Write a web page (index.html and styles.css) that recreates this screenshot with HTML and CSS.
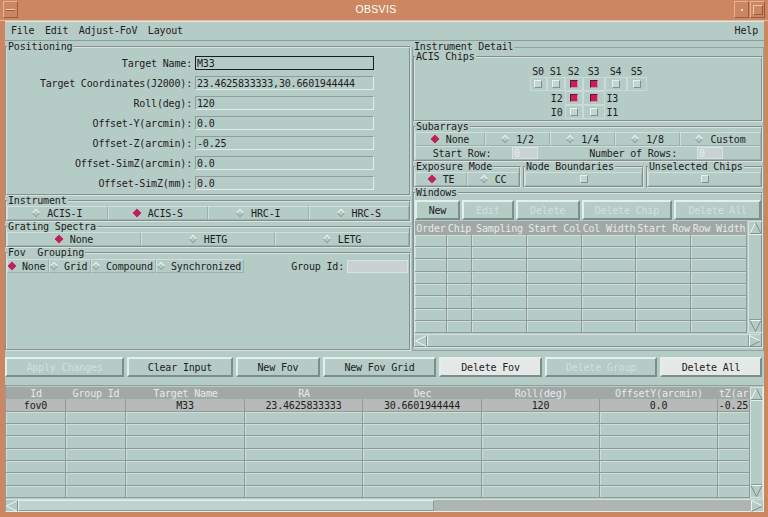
FILE: index.html
```html
<!DOCTYPE html>
<html lang="en">
<head>
<meta charset="UTF-8">
<title>OBSVIS</title>
<link rel="stylesheet" href="styles.css">
</head>
<body>
<div class="window">
  <div class="titlebar">
    <div class="wm-btn wm-menu"><span class="wm-dash"></span></div>
    <div class="wm-title">OBSVIS</div>
    <div class="wm-btn wm-min"><span class="wm-dot"></span></div>
    <div class="wm-btn wm-max"><span class="wm-square"></span></div>
  </div>

  <div class="client">
    <div class="menubar">
      <span>File</span><span>Edit</span><span>Adjust-FoV</span><span>Layout</span>
      <span class="help">Help</span>
    </div>

    <div class="upper">
      <!-- left column -->
      <div class="left">
        <fieldset class="group positioning">
          <legend>Positioning</legend>
          <div class="pos-row"><label>Target Name:</label><input class="field focus" value="M33"></div>
          <div class="pos-row"><label>Target Coordinates(J2000):</label><input class="field" value="23.4625833333,30.6601944444"></div>
          <div class="pos-row"><label>Roll(deg):</label><input class="field" value="120"></div>
          <div class="pos-row"><label>Offset-Y(arcmin):</label><input class="field" value="0.0"></div>
          <div class="pos-row"><label>Offset-Z(arcmin):</label><input class="field" value="-0.25"></div>
          <div class="pos-row"><label>Offset-SimZ(arcmin):</label><input class="field" value="0.0"></div>
          <div class="pos-row"><label>Offset-SimZ(mm):</label><input class="field" value="0.0"></div>
        </fieldset>

        <fieldset class="group">
          <legend>Instrument</legend>
          <div class="radio-row cols-4">
            <div class="cell"><span class="dia"></span>ACIS-I</div>
            <div class="cell"><span class="dia on"></span>ACIS-S</div>
            <div class="cell"><span class="dia"></span>HRC-I</div>
            <div class="cell"><span class="dia"></span>HRC-S</div>
          </div>
        </fieldset>

        <fieldset class="group">
          <legend>Grating Spectra</legend>
          <div class="radio-row cols-3">
            <div class="cell"><span class="dia on"></span>None</div>
            <div class="cell"><span class="dia"></span>HETG</div>
            <div class="cell"><span class="dia"></span>LETG</div>
          </div>
        </fieldset>

        <fieldset class="group grouping">
          <legend>Fov&nbsp;&nbsp;Grouping</legend>
          <div class="group-row">
            <div class="cell left-cell w42"><span class="dia on"></span>None</div>
            <div class="cell left-cell w42"><span class="dia"></span>Grid</div>
            <div class="cell left-cell w65"><span class="dia"></span>Compound</div>
            <div class="cell left-cell w88"><span class="dia"></span>Synchronized</div>
            <span class="group-id">Group Id:</span>
            <input class="field off group-input" value="" disabled>
          </div>
        </fieldset>
      </div>

      <!-- right column -->
      <fieldset class="group right">
        <legend>Instrument Detail</legend>

        <fieldset class="group chips-group">
          <legend>ACIS Chips</legend>
          <div class="chips">
            <span class="chip-label">S0</span><span class="chip-label">S1</span><span class="chip-label">S2</span>
            <span class="chip-label">S3</span><span class="chip-label">S4</span><span class="chip-label">S5</span>

            <span class="chip"><span class="box"></span></span>
            <span class="chip"><span class="box"></span></span>
            <span class="chip"><span class="box on"></span></span>
            <span class="chip"><span class="box on"></span></span>
            <span class="chip"><span class="box"></span></span>
            <span class="chip"><span class="box"></span></span>

            <span></span>
            <span class="chip-label to-right">I2</span>
            <span class="chip"><span class="box on"></span></span>
            <span class="chip"><span class="box on"></span></span>
            <span class="chip-label to-left">I3</span>
            <span></span>

            <span></span>
            <span class="chip-label to-right">I0</span>
            <span class="chip"><span class="box"></span></span>
            <span class="chip"><span class="box"></span></span>
            <span class="chip-label to-left">I1</span>
            <span></span>
          </div>
        </fieldset>

        <fieldset class="group">
          <legend>Subarrays</legend>
          <div class="radio-row sub-modes">
            <div class="cell"><span class="dia on"></span>None</div>
            <div class="cell"><span class="dia"></span>1/2</div>
            <div class="cell"><span class="dia"></span>1/4</div>
            <div class="cell"><span class="dia"></span>1/8</div>
            <div class="cell"><span class="dia"></span>Custom</div>
          </div>
          <div class="sub-rows">
            <span class="sub-label">Start Row:</span>
            <span><input class="field off tiny" value="0" disabled></span>
            <span class="sub-label to-right">Number of Rows:</span>
            <span><input class="field off tiny" value="0" disabled></span>
            <span></span>
          </div>
        </fieldset>

        <div class="exp-row">
          <fieldset class="group exp">
            <legend>Exposure Mode</legend>
            <div class="radio-row cols-2">
              <div class="cell"><span class="dia on"></span>TE</div>
              <div class="cell"><span class="dia"></span>CC</div>
            </div>
          </fieldset>
          <fieldset class="group node">
            <legend>Node Boundaries</legend>
            <div class="radio-row"><div class="cell"><span class="box"></span></div></div>
          </fieldset>
          <fieldset class="group unsel">
            <legend>Unselected Chips</legend>
            <div class="radio-row"><div class="cell"><span class="box"></span></div></div>
          </fieldset>
        </div>

        <fieldset class="group windows">
          <legend>Windows</legend>
          <div class="win-buttons">
            <button class="btn w45">New</button>
            <button class="btn w52 off">Edit</button>
            <button class="btn w64 off">Delete</button>
            <button class="btn w91 off">Delete Chip</button>
            <button class="btn w87 off">Delete All</button>
          </div>
          <div class="win-body">
            <div class="grid win-grid">
              <span class="th">Order</span><span class="th">Chip</span><span class="th">Sampling</span><span class="th">Start Col</span>
              <span class="th">Col Width</span><span class="th">Start Row</span><span class="th">Row Width</span>
            </div>
            <div class="vscroll">
              <svg class="arr" width="13" height="12" viewBox="0 0 13 12"><path d="M1 11.5L6.5 0.5" stroke="#eef4f2" fill="none"/><path d="M6.5 0.5L12 11.5H1" stroke="#7f928e" fill="none"/></svg>
              <span class="track"></span>
              <svg class="arr" width="13" height="12" viewBox="0 0 13 12"><path d="M1 0.5H12" stroke="#eef4f2" fill="none"/><path d="M1 0.5L6.5 11.5L12 0.5" stroke="#7f928e" fill="none"/></svg>
            </div>
          </div>
          <div class="hscroll">
            <svg class="arr" width="12" height="12" viewBox="0 0 12 12"><path d="M11.5 0.5L0.5 6L11.5 11.5" stroke="#eef4f2" fill="none"/><path d="M11.5 0.5V11.5" stroke="#7f928e" fill="none"/></svg>
            <span class="track"></span>
            <svg class="arr" width="12" height="12" viewBox="0 0 12 12"><path d="M0.5 11.5V0.5L11.5 6" stroke="#eef4f2" fill="none"/><path d="M11.5 6L0.5 11.5" stroke="#7f928e" fill="none"/></svg>
          </div>
        </fieldset>
      </fieldset>
    </div>

    <div class="actions">
      <button class="btn w119 off">Apply Changes</button>
      <button class="btn w106">Clear Input</button>
      <button class="btn w84">New Fov</button>
      <button class="btn w113">New Fov Grid</button>
      <button class="btn w103 light">Delete Fov</button>
      <button class="btn w112 off">Delete Group</button>
      <button class="btn w102 light">Delete All</button>
    </div>

    <div class="fov-frame">
      <div class="fov-body">
        <div class="grid fov-grid">
          <span class="th">Id</span><span class="th">Group Id</span><span class="th">Target Name</span><span class="th">RA</span>
          <span class="th">Dec</span><span class="th">Roll(deg)</span><span class="th">OffsetY(arcmin)</span><span class="th cut">tZ(ar</span>

          <span class="td sel">fov0</span><span class="td sel"></span><span class="td sel">M33</span><span class="td sel">23.4625833333</span>
          <span class="td sel">30.6601944444</span><span class="td sel">120</span><span class="td sel">0.0</span><span class="td sel">-0.25</span>
        </div>
        <div class="vscroll">
          <svg class="arr" width="13" height="12" viewBox="0 0 13 12"><path d="M1 11.5L6.5 0.5" stroke="#eef4f2" fill="none"/><path d="M6.5 0.5L12 11.5H1" stroke="#7f928e" fill="none"/></svg>
          <span class="track"></span>
          <svg class="arr" width="13" height="12" viewBox="0 0 13 12"><path d="M1 0.5H12" stroke="#eef4f2" fill="none"/><path d="M1 0.5L6.5 11.5L12 0.5" stroke="#7f928e" fill="none"/></svg>
        </div>
      </div>
      <div class="hscroll fov-hscroll">
        <svg class="arr" width="12" height="12" viewBox="0 0 12 12"><path d="M11.5 0.5L0.5 6L11.5 11.5" stroke="#eef4f2" fill="none"/><path d="M11.5 0.5V11.5" stroke="#7f928e" fill="none"/></svg>
        <span class="thumb"></span>
        <span class="trough"></span>
        <svg class="arr" width="12" height="12" viewBox="0 0 12 12"><path d="M0.5 11.5V0.5L11.5 6" stroke="#eef4f2" fill="none"/><path d="M11.5 6L0.5 11.5" stroke="#7f928e" fill="none"/></svg>
      </div>
    </div>
  </div>
</div>

<script>
    // empty rows of both tables
    function fillRows(grid, cols, count) {
        for (let r = 0; r < count; r++) {
            for (let c = 0; c < cols; c++) {
                const cell = document.createElement('span');
                cell.className = 'td';
                grid.appendChild(cell);
            }
        }
    }
    fillRows(document.querySelector('.win-grid'), 7, 8);
    fillRows(document.querySelector('.fov-grid'), 8, 7);
</script>
</body>
</html>
```

FILE: styles.css
```css
body {
    margin: 0;
    background: #cc8762;
    font-family: "DejaVu Sans Mono", monospace;
    font-size: 10px;
    letter-spacing: -0.17px;
    color: #1d2120;
    overflow: hidden;
}
.window {
    width: 768px;
    height: 517px;
    display: flex;
    flex-direction: column;
    background: #cc8762;
}

/* window manager frame */
.titlebar {
    height: 21px;
    display: flex;
    box-sizing: border-box;
    padding: 1px 3px 2px;
    border-bottom: 1px solid #eab89c;
}
.wm-btn {
    width: 15px;
    box-sizing: border-box;
    border: 1px solid;
    border-color: #e8b395 #9a5c3e #9a5c3e #e8b395;
    display: flex;
    align-items: center;
    justify-content: center;
}
.wm-dash {
    width: 9px;
    height: 1px;
    background: #f3d2c0;
    border-bottom: 1px solid #955a3b;
}
.wm-title {
    flex: 1;
    text-align: center;
    color: #ffffff;
    font-family: "Liberation Sans", Arial, sans-serif;
    font-size: 10.5px;
    letter-spacing: 0.3px;
    line-height: 17px;
}
.wm-min {
    margin-right: 1px;
}
.wm-dot {
    width: 2px;
    height: 2px;
    background: #f5d8c8;
}
.wm-square {
    width: 10px;
    height: 10px;
    box-sizing: border-box;
    border: 1px solid;
    border-color: #f0c6ae #965a3c #965a3c #f0c6ae;
}

.client {
    margin: 0 4px 5px 5px;
    height: 491px;
    background: #b4cbc6;
    display: flex;
    flex-direction: column;
}

.menubar {
    height: 20px;
    box-sizing: border-box;
    display: flex;
    align-items: center;
    padding: 0 6px;
    border-bottom: 1px solid #8a9d99;
    box-shadow: inset 0 1px 0 #dbe8e5;
}
.menubar span {
    margin-right: 10.5px;
}
.menubar .help {
    margin-left: auto;
    margin-right: 0;
}

.upper {
    display: flex;
    height: 309px;
    margin-top: 1px;
}
.left {
    width: 406px;
    margin-right: 1px;
    display: flex;
    flex-direction: column;
}

/* etched frames */
.group {
    margin: 0;
    padding: 0;
    min-width: 0;
    border: 2px groove #d6e4e1;
}
.group legend {
    padding: 0 1px;
    margin-left: 0;
    line-height: 10px;
    height: 10px;
}
.positioning {
    padding: 1px 0;
}
.grouping {
    flex: 1;
}
.right {
    flex: 1;
    border-width: 1px;
    border-style: solid;
    border-color: #8fa39f;
    padding-bottom: 1px;
}
.right .group {
    margin-top: 0;
}

.pos-row {
    display: flex;
    align-items: center;
    height: 20px;
}
.pos-row label {
    width: 185px;
    margin-right: 3px;
    text-align: right;
    white-space: nowrap;
}
.field {
    width: 179px;
    height: 14px;
    box-sizing: border-box;
    margin: 0;
    padding: 0 1px;
    border: 1px solid;
    border-color: #8c9f9b #e2ece9 #e2ece9 #8c9f9b;
    background: #b4cbc6;
    font: inherit;
    letter-spacing: inherit;
    color: inherit;
    outline: none;
}
.field.focus {
    border-color: #1a1e1d;
}
.field.off {
    background: #c9d2d0;
    color: #e9eeed;
    border-color: #d8e2e0;
}

/* radio rows */
.radio-row {
    display: grid;
    height: 14px;
}
.cols-4 {
    grid-template-columns: repeat(4, 1fr);
}
.cols-3 {
    grid-template-columns: repeat(3, 1fr);
}
.cols-2 {
    grid-template-columns: repeat(2, 1fr);
}
.cell {
    display: flex;
    align-items: center;
    justify-content: center;
    gap: 7px;
    box-sizing: border-box;
    border: 1px solid;
    border-color: #d0dfdc #9db1ad #9db1ad #d0dfdc;
    white-space: nowrap;
}
.dia {
    width: 6px;
    height: 6px;
    box-sizing: border-box;
    margin: 0 1px;
    transform: rotate(45deg);
    border: 1px solid;
    border-color: #eef4f2 #8fa39f #8fa39f #eef4f2;
}
.dia.on {
    background: #c0225a;
    border-color: #c0225a;
}

.group-row {
    display: flex;
    height: 14px;
    align-items: center;
    margin-top: 1px;
}
.left-cell {
    justify-content: flex-start;
    height: 14px;
    padding-left: 0;
    gap: 6px;
}
.w42 { width: 42px; }
.w65 { width: 65px; }
.w88 { width: 88px; }
.group-id {
    margin-left: auto;
    margin-right: 3px;
}
.group-input {
    width: 61px;
    height: 13px;
    margin-right: 1px;
}

/* ACIS chips */
.chips-group {
    padding-bottom: 1px;
}
.chips {
    display: grid;
    grid-template-columns: 17px 18px 18px 22px 22px 20px;
    grid-template-rows: 12px 14px 14px 14px;
    width: fit-content;
    margin: 3px auto 0;
}
.chip-label {
    display: flex;
    align-items: center;
    justify-content: center;
}
.chip-label.to-right {
    justify-content: flex-end;
    padding-right: 2px;
}
.chip-label.to-left {
    justify-content: flex-start;
    padding-left: 2px;
}
.chip {
    display: flex;
    align-items: center;
    justify-content: center;
    border: 1px solid #cadad6;
}
.box {
    width: 8px;
    height: 8px;
    box-sizing: border-box;
    border: 1px solid;
    border-color: #e9f1ef #7f928e #7f928e #e9f1ef;
    background: #c3d5d1;
}
.box.on {
    background: #c0225a;
    border-color: #5e1730 #e08aa8 #e08aa8 #5e1730;
}

/* subarrays */
.sub-modes {
    grid-template-columns: 70px 65px 65px 65px 1fr;
}
.sub-rows {
    display: grid;
    grid-template-columns: 92px 34px 1fr 34px 33px;
    height: 14px;
    align-items: center;
    box-sizing: border-box;
    border: 1px solid;
    border-color: #d0dfdc #9db1ad #9db1ad #d0dfdc;
}
.sub-label {
    text-align: center;
}
.sub-label.to-right {
    text-align: right;
    padding-right: 16px;
}
.tiny {
    width: 26px;
    height: 12px;
    margin-left: 4px;
    display: block;
}

.exp-row {
    display: flex;
    gap: 2px;
}
.exp {
    width: 104px;
}
.node {
    width: 117px;
}
.unsel {
    flex: 1;
}

/* windows */
.windows {
    margin-top: 1px;
    padding: 2px 0 0;
}
.win-buttons {
    display: flex;
    gap: 2px;
}
.btn {
    height: 20px;
    box-sizing: border-box;
    margin: 0;
    padding: 0;
    border: 2px solid;
    border-color: #e4eeec #7b8e8a #7b8e8a #e4eeec;
    background: #b4cbc6;
    font: inherit;
    letter-spacing: inherit;
    color: #1d2120;
    white-space: nowrap;
}
.btn.off {
    color: #d3e0dd;
}
.btn.light {
    background: #e4e9e8;
}
.w45 { width: 45px; }
.w52 { width: 52px; }
.w64 { width: 64px; }
.w91 { width: 91px; }
.w87 { width: 87px; }
.w119 { width: 119px; }
.w106 { width: 106px; }
.w84 { width: 84px; }
.w113 { width: 113px; }
.w103 { width: 103px; }
.w112 { width: 112px; }
.w102 { width: 102px; }

.win-body {
    display: flex;
    margin-top: 1px;
}
.grid {
    display: grid;
}
.win-grid {
    width: 332px;
    grid-template-columns: 32px 25px 55px 55px 54px 55px 56px;
    grid-template-rows: 14px 12px 12px 13px 12px 12px 13px 12px 12px;
}
.th {
    background: #a1a8a6;
    color: #e6ebea;
    display: flex;
    align-items: center;
    justify-content: center;
    overflow: hidden;
    white-space: nowrap;
}
.th.cut {
    justify-content: flex-start;
    padding-left: 1px;
}
.td {
    display: flex;
    align-items: center;
    justify-content: center;
    overflow: hidden;
    white-space: nowrap;
    border-right: 1px solid #8f9b98;
    border-bottom: 1px solid #8f9b98;
    box-shadow: inset 1px 1px 0 #d0dedb;
}
.td.sel {
    background: #b7bab9;
    box-shadow: none;
}

.vscroll {
    width: 15px;
    margin-left: 1px;
    display: flex;
    flex-direction: column;
    align-items: center;
    box-sizing: border-box;
    border: 1px solid #d4e2df;
}
.vscroll .track {
    flex: 1;
    align-self: stretch;
    border-top: 1px solid #e4eeec;
    border-bottom: 1px solid #8a9d99;
}
.arr {
    display: block;
    flex: none;
}
.hscroll {
    display: flex;
    align-items: center;
    height: 12px;
    margin-top: 1px;
    box-sizing: border-box;
    border-top: 1px solid #d4e2df;
}
.hscroll .track {
    flex: 1;
    height: 100%;
    box-sizing: border-box;
    border-left: 1px solid #e4eeec;
    border-right: 1px solid #8a9d99;
}

/* fov table */
.actions {
    height: 34px;
    box-sizing: border-box;
    padding-top: 6px;
    display: flex;
    gap: 3px;
}
.fov-frame {
    height: 127px;
    box-sizing: border-box;
    border: 1px solid;
    border-color: #8c9f9b #e2ece9 #e2ece9 #8c9f9b;
    padding: 1px 0 0;
}
.fov-body {
    display: flex;
}
.fov-grid {
    width: 744px;
    grid-template-columns: 60px 60px 119px 118px 119px 118px 118px 32px;
    grid-template-rows: 12px 13px 12px 12px 13px 12px 12px 13px 12px;
}
.fov-body .vscroll {
    width: 13px;
    margin-left: 0;
}
.fov-hscroll .thumb {
    width: 416px;
    height: 100%;
    box-sizing: border-box;
    border: 1px solid;
    border-color: #e4eeec #8a9d99 #8a9d99 #e4eeec;
    background: #bed3ce;
}
.fov-hscroll .trough {
    flex: 1;
    height: 100%;
    background: #aeb6b4;
}
```
